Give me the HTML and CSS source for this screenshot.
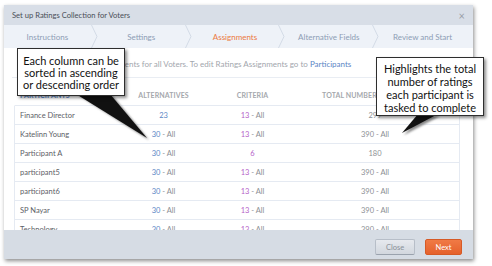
FILE: index.html
```html
<!DOCTYPE html>
<html>
<head>
<meta charset="utf-8">
<link rel="stylesheet" href="styles.css">
</head>
<body>
<div class="stage">
  <div class="modal">
    <div class="m-head">
      <span class="title">Set up Ratings Collection for Voters</span>
      <span class="x">&times;</span>
    </div>
    <div class="tabs">
      <div class="tab"><span class="lbl">Instructions</span><svg class="chev" width="7" height="23" viewBox="0 0 7 23"><polyline points="0.5,0 6,11.5 0.5,23" fill="none" stroke="#d3dbe6" stroke-width="1"/></svg></div>
      <div class="tab"><span class="lbl">Settings</span><svg class="chev" width="7" height="23" viewBox="0 0 7 23"><polyline points="0.5,0 6,11.5 0.5,23" fill="none" stroke="#d3dbe6" stroke-width="1"/></svg></div>
      <div class="tab active"><span class="lbl">Assignments</span><svg class="chev" width="7" height="23" viewBox="0 0 7 23"><polyline points="0.5,0 6,11.5 0.5,23" fill="none" stroke="#d3dbe6" stroke-width="1"/></svg></div>
      <div class="tab"><span class="lbl">Alternative Fields</span><svg class="chev" width="7" height="23" viewBox="0 0 7 23"><polyline points="0.5,0 6,11.5 0.5,23" fill="none" stroke="#d3dbe6" stroke-width="1"/></svg></div>
      <div class="tab"><span class="lbl">Review and Start</span><span class="chev-space"></span></div>
    </div>
    <div class="m-body">
      <div class="info">These are the Ratings Assignments for all Voters. To edit Ratings Assignments go to <span class="link">Participants</span></div>
      <div class="table">
        <div class="row head">
          <div class="c-name sorted">PARTICIPANTS</div>
          <div class="c-alt">ALTERNATIVES</div>
          <div class="c-crit">CRITERIA</div>
          <div class="c-total">TOTAL NUMBER OF RATINGS</div>
        </div>
        <div class="row">
          <div class="c-name">Finance Director</div>
          <div class="c-alt"><span class="n-alt">23</span></div>
          <div class="c-crit"><span class="n-crit">13</span> - All</div>
          <div class="c-total">299</div>
        </div>
        <div class="row">
          <div class="c-name">Katelinn Young</div>
          <div class="c-alt"><span class="n-alt">30</span> - All</div>
          <div class="c-crit"><span class="n-crit">13</span> - All</div>
          <div class="c-total">390 - All</div>
        </div>
        <div class="row">
          <div class="c-name">Participant A</div>
          <div class="c-alt"><span class="n-alt">30</span> - All</div>
          <div class="c-crit"><span class="n-crit">6</span></div>
          <div class="c-total">180</div>
        </div>
        <div class="row">
          <div class="c-name">participant5</div>
          <div class="c-alt"><span class="n-alt">30</span> - All</div>
          <div class="c-crit"><span class="n-crit">13</span> - All</div>
          <div class="c-total">390 - All</div>
        </div>
        <div class="row">
          <div class="c-name">participant6</div>
          <div class="c-alt"><span class="n-alt">30</span> - All</div>
          <div class="c-crit"><span class="n-crit">13</span> - All</div>
          <div class="c-total">390 - All</div>
        </div>
        <div class="row">
          <div class="c-name">SP Nayar</div>
          <div class="c-alt"><span class="n-alt">30</span> - All</div>
          <div class="c-crit"><span class="n-crit">13</span> - All</div>
          <div class="c-total">390 - All</div>
        </div>
        <div class="row">
          <div class="c-name">Technology</div>
          <div class="c-alt"><span class="n-alt">30</span> - All</div>
          <div class="c-crit"><span class="n-crit">13</span> - All</div>
          <div class="c-total">390 - All</div>
        </div>
      </div>
    </div>
    <div class="m-foot">
      <button class="btn btn-close">Close</button>
      <button class="btn btn-next">Next</button>
    </div>
  </div>

  <svg class="pointers" width="492" height="266" viewBox="0 0 492 266">
    <defs>
      <filter id="blur" x="-20%" y="-20%" width="140%" height="140%"><feGaussianBlur stdDeviation="1.2"/></filter>
    </defs>
    <polygon points="78,95 112,95 149,140" fill="#888" filter="url(#blur)"/>
    <polygon points="76,94 110,94 147,138" fill="#111"/>
    <polygon points="420,116 440,116 404,135" fill="#888" filter="url(#blur)"/>
    <polygon points="418,114 438,114 402,133" fill="#111"/>
  </svg>

  <div class="callout c-left">Each column can be<br>sorted in ascending<br>or descending order</div>
  <div class="callout c-right">Highlights the total<br>number of ratings<br>each participant is<br>tasked to complete</div>
</div>
</body>
</html>
```

FILE: styles.css
```css
html, body {
  margin: 0;
  padding: 0;
  background: #ffffff;
}

body {
  font-family: Lato, "Open Sans", sans-serif;
}

.stage {
  position: relative;
  width: 492px;
  height: 266px;
  padding: 5px 0 0 4px;
  box-sizing: border-box;
  overflow: hidden;
}

.modal {
  width: 469px;
  height: 254px;
  display: flex;
  flex-direction: column;
  background: #ffffff;
  box-shadow: 1px 2px 4px rgba(0, 0, 0, 0.45);
  overflow: hidden;
}

.m-head {
  height: 20px;
  flex: none;
  background: #d8dee7;
  display: flex;
  align-items: center;
  justify-content: space-between;
  padding: 0 8px;
  font-size: 7.6px;
  color: #4a4f57;
}

.m-head .x {
  font-size: 11px;
  color: #9aa0a8;
  line-height: 1;
}

.tabs {
  height: 23px;
  flex: none;
  background: #eef2f8;
  display: flex;
}

.tab {
  flex: 1;
  display: flex;
  align-items: center;
  font-size: 8px;
  color: #8d9db5;
}

.tab .lbl {
  flex: 1;
  text-align: center;
}

.tab .chev,
.tab .chev-space {
  flex: none;
  width: 7px;
  height: 23px;
  display: block;
}

.tab.active {
  color: #ec7a3f;
}

.m-body {
  flex: 1;
  overflow: hidden;
  padding: 0 13px 0 8px;
}

.info {
  height: 30px;
  box-sizing: border-box;
  padding: 11px 0 0 6px;
  font-size: 8px;
  line-height: 10px;
  color: #a2a6ad;
  border-bottom: 1px solid #e9edf3;
  white-space: nowrap;
}

.info .link {
  color: #5b86c5;
}

.table {
  margin-left: 2px;
}

.row {
  display: grid;
  grid-template-columns: 106px 85px 93px 1fr;
  height: 19px;
  box-sizing: border-box;
  align-items: center;
  border-left: 1px solid #e5eaf2;
  border-right: 1px solid #e5eaf2;
  border-bottom: 1px solid #e5eaf2;
  font-size: 7.5px;
  line-height: 9px;
  color: #8c8f94;
}

.row.head {
  height: 28px;
  align-items: end;
  padding-bottom: 5px;
  border-left-color: transparent;
  border-right-color: transparent;
  font-size: 7px;
  font-weight: 700;
  color: #a5a8ad;
  letter-spacing: 0.1px;
}

.row.head .c-total {
  white-space: nowrap;
  overflow: hidden;
  text-align: left;
  padding-left: 23px;
}

.c-name {
  padding-left: 5px;
  color: #5c6066;
}

.row.head .c-name.sorted {
  color: #5b8bd2;
}

.c-alt,
.c-crit {
  text-align: center;
}

.c-total {
  text-align: center;
  padding-right: 8px;
}

.n-alt {
  color: #5b86c5;
}

.n-crit {
  color: #b45ec8;
}

.m-foot {
  height: 29px;
  flex: none;
  box-sizing: border-box;
  background: #d6dce4;
  display: flex;
  justify-content: flex-end;
  align-items: flex-start;
  gap: 10px;
  padding: 9px 11px 0 0;
}

.btn {
  height: 16px;
  margin: 0;
  padding: 0;
  font-family: Lato, "Open Sans", sans-serif;
  font-size: 7.5px;
  border-radius: 2px;
  cursor: pointer;
}

.btn-close {
  width: 40px;
  color: #8a9099;
  background: linear-gradient(#e6e9ee, #d2d7de);
  border: 1px solid #b7bec8;
  border-bottom-color: #9aa2ad;
}

.btn-next {
  width: 37px;
  color: #ffffff;
  background: linear-gradient(#f07a45, #e5612c);
  border: 1px solid #d65a26;
}

.pointers {
  position: absolute;
  left: 0;
  top: 0;
  pointer-events: none;
}

.callout {
  position: absolute;
  box-sizing: border-box;
  background: #ffffff;
  border: 1px solid #2e2e2e;
  box-shadow: 2px 2px 3px rgba(0, 0, 0, 0.45);
  text-align: center;
  font-family: Lato, "Open Sans", sans-serif;
  font-size: 11px;
  color: #111111;
}

.c-left {
  left: 17px;
  top: 48px;
  width: 108px;
  height: 48px;
  padding-top: 6px;
  line-height: 12px;
}

.c-right {
  left: 376px;
  top: 57px;
  width: 108px;
  height: 59px;
  padding-top: 4px;
  line-height: 13px;
}
```
